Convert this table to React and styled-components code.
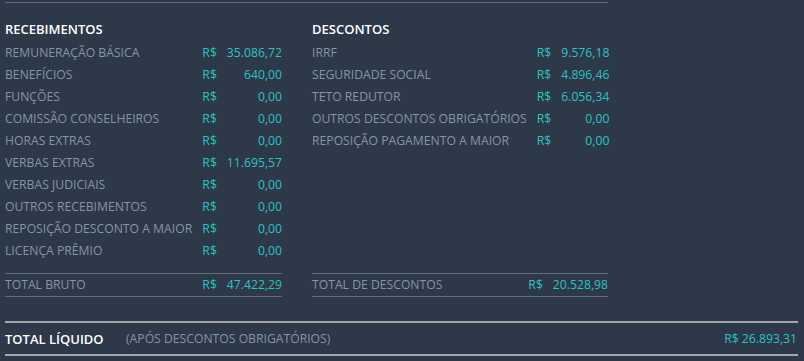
import React from "react";
import styled, { createGlobalStyle } from "styled-components";

const recebimentos = [
  ["REMUNERAÇÃO BÁSICA", "35.086,72"],
  ["BENEFÍCIOS", "640,00"],
  ["FUNÇÕES", "0,00"],
  ["COMISSÃO CONSELHEIROS", "0,00"],
  ["HORAS EXTRAS", "0,00"],
  ["VERBAS EXTRAS", "11.695,57"],
  ["VERBAS JUDICIAIS", "0,00"],
  ["OUTROS RECEBIMENTOS", "0,00"],
  ["REPOSIÇÃO DESCONTO A MAIOR", "0,00"],
  ["LICENÇA PRÊMIO", "0,00"],
];

const descontos = [
  ["IRRF", "9.576,18"],
  ["SEGURIDADE SOCIAL", "4.896,46"],
  ["TETO REDUTOR", "6.056,34"],
  ["OUTROS DESCONTOS OBRIGATÓRIOS", "0,00"],
  ["REPOSIÇÃO PAGAMENTO A MAIOR", "0,00"],
];

const GlobalStyle = createGlobalStyle`
  html, body {
    margin: 0;
    background: #2d3849;
    font-family: "Open Sans", "Liberation Sans", sans-serif;
    font-size: 12.2px;
  }
`;

const Page = styled.div`
  width: 804px;
  height: 361px;
  box-sizing: border-box;
  padding: 2px 6px 0 5px;
  overflow: hidden;
`;

const Columns = styled.div`
  width: 603px;
  border-top: 1px solid #5f6a79;
  padding-top: 15px;
  display: flex;
  gap: 30px;
`;

const Column = styled.div`
  width: ${(p) => p.$w}px;
  display: flex;
  flex-direction: column;
`;

const Heading = styled.div`
  color: #ffffff;
  font-size: 13px;
  font-weight: 600;
  line-height: 22px;
  margin-bottom: 2px;
`;

const Table = styled.div`
  display: grid;
  grid-template-columns: 1fr auto auto;
  column-gap: 10px;
  line-height: 22px;
`;

const Label = styled.span`
  color: #8495a9;
  white-space: nowrap;
`;

const Money = styled.span`
  color: #2cc3c0;
  text-align: ${(p) => (p.$right ? "right" : "left")};
  white-space: nowrap;
`;

const Total = styled(Table)`
  margin-top: auto;
  border-top: 1px solid #5f6a79;
  border-bottom: 1px solid #5f6a79;
`;

const Spacer = styled.div`
  height: 11px;
`;

const NetRow = styled.div`
  margin-top: 24px;
  border-top: 2px solid #a3a7ac;
  border-bottom: 2px solid #a3a7ac;
  height: 31px;
  display: flex;
  align-items: center;
`;

const NetTitle = styled.span`
  color: #ffffff;
  font-size: 13px;
  font-weight: 600;
  width: 121px;
`;

const NetNote = styled.span`
  color: #8495a9;
  flex: 1;
`;

const NetValue = styled.span`
  color: #2cc3c0;
  padding-right: 1px;
`;

function Rows({ items }) {
  return items.map(([label, value]) => (
    <React.Fragment key={label}>
      <Label>{label}</Label>
      <Money>R$</Money>
      <Money $right>{value}</Money>
    </React.Fragment>
  ));
}

export default function App() {
  return (
    <Page>
      <GlobalStyle />
      <Columns>
        <Column $w={277}>
          <Heading>RECEBIMENTOS</Heading>
          <Table>
            <Rows items={recebimentos} />
          </Table>
          <Spacer />
          <Total>
            <Rows items={[["TOTAL BRUTO", "47.422,29"]]} />
          </Total>
        </Column>
        <Column $w={296}>
          <Heading>DESCONTOS</Heading>
          <Table>
            <Rows items={descontos} />
          </Table>
          <Total>
            <Rows items={[["TOTAL DE DESCONTOS", "20.528,98"]]} />
          </Total>
        </Column>
      </Columns>
      <NetRow>
        <NetTitle>TOTAL LÍQUIDO</NetTitle>
        <NetNote>(APÓS DESCONTOS OBRIGATÓRIOS)</NetNote>
        <NetValue>R$ 26.893,31</NetValue>
      </NetRow>
    </Page>
  );
}
